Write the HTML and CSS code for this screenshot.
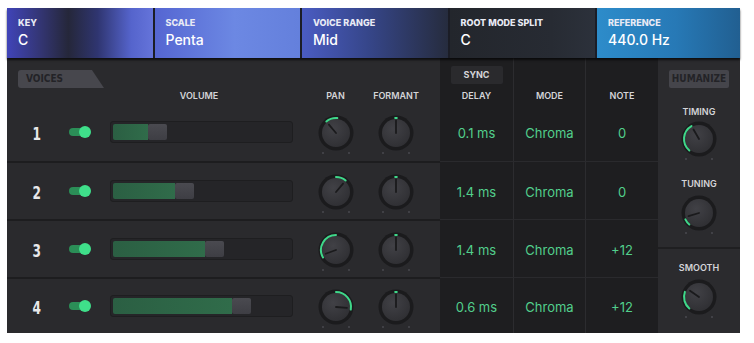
FILE: index.html
```html
<!DOCTYPE html>
<html lang="en">
<head>
<meta charset="UTF-8" />
<meta name="viewport" content="width=device-width, initial-scale=1" />
<title>Voice Harmonizer</title>
<link rel="stylesheet" href="styles.css">
</head>
<body>
  <svg class="defs" width="0" height="0" aria-hidden="true">
    <defs>
      <radialGradient id="knobBody" cx="40%" cy="35%" r="70%">
        <stop offset="0%" stop-color="#414146" />
        <stop offset="100%" stop-color="#2f2f33" />
      </radialGradient>
      <symbol id="knob-base" viewBox="0 0 40 44">
        <circle cx="20" cy="20" r="17.5" fill="#1b1b1d" />
        <circle cx="20" cy="20" r="14" fill="url(#knobBody)" />
        <circle cx="7" cy="40" r="0.9" fill="#4c4c52" />
        <circle cx="33" cy="40" r="0.9" fill="#4c4c52" />
      </symbol>
    </defs>
  </svg>

  <div class="app">
    <header class="topbar">
      <div class="tile tile-key"><span class="tile-label">KEY</span><span class="tile-value">C</span></div>
      <div class="tile tile-scale"><span class="tile-label">SCALE</span><span class="tile-value">Penta</span></div>
      <div class="tile tile-range"><span class="tile-label">VOICE RANGE</span><span class="tile-value">Mid</span></div>
      <div class="tile tile-split"><span class="tile-label">ROOT MODE SPLIT</span><span class="tile-value">C</span></div>
      <div class="tile tile-ref"><span class="tile-label">REFERENCE</span><span class="tile-value">440.0 Hz</span></div>
    </header>

    <main class="panel">
      <section class="voices">
        <div class="voices-head">
          <div class="tab">VOICES</div>
          <div class="voice-grid col-labels">
            <span></span><span></span>
            <span class="label">VOLUME</span>
            <span class="label">PAN</span>
            <span class="label">FORMANT</span>
          </div>
        </div>

        <div class="voice-grid voice-row">
          <span class="voice-num"><b>1</b></span>
          <span class="toggle"></span>
          <div class="slider"><span class="fill" style="width:35px"></span><span class="thumb"></span></div>
          <svg class="knob" viewBox="0 0 40 44"><use href="#knob-base" /><path class="arc" d="M10.36 8.51 A15 15 0 0 1 21.31 5.06" /><line class="needle" x1="20" y1="20" x2="12.93" y2="11.57" /></svg>
          <svg class="knob" viewBox="0 0 40 44"><use href="#knob-base" /><path class="arc" d="M19.2 5.02 A15 15 0 0 1 20.8 5.02" /><line class="needle" x1="20" y1="20" x2="20" y2="7.5" /></svg>
        </div>

        <div class="voice-grid voice-row">
          <span class="voice-num"><b>2</b></span>
          <span class="toggle"></span>
          <div class="slider"><span class="fill" style="width:62px"></span><span class="thumb"></span></div>
          <svg class="knob" viewBox="0 0 40 44"><use href="#knob-base" /><path class="arc" d="M20 5 A15 15 0 0 1 29.64 8.51" /><line class="needle" x1="20" y1="20" x2="27.07" y2="11.57" /></svg>
          <svg class="knob" viewBox="0 0 40 44"><use href="#knob-base" /><path class="arc" d="M19.2 5.02 A15 15 0 0 1 20.8 5.02" /><line class="needle" x1="20" y1="20" x2="20" y2="7.5" /></svg>
        </div>

        <div class="voice-grid voice-row">
          <span class="voice-num"><b>3</b></span>
          <span class="toggle"></span>
          <div class="slider"><span class="fill" style="width:92px"></span><span class="thumb"></span></div>
          <svg class="knob" viewBox="0 0 40 44"><use href="#knob-base" /><path class="arc" d="M7.01 27.5 A15 15 0 0 1 20 5" /><line class="needle" x1="20" y1="20" x2="9.66" y2="23.76" /></svg>
          <svg class="knob" viewBox="0 0 40 44"><use href="#knob-base" /><path class="arc" d="M19.2 5.02 A15 15 0 0 1 20.8 5.02" /><line class="needle" x1="20" y1="20" x2="20" y2="7.5" /></svg>
        </div>

        <div class="voice-grid voice-row last">
          <span class="voice-num"><b>4</b></span>
          <span class="toggle"></span>
          <div class="slider"><span class="fill" style="width:119px"></span><span class="thumb"></span></div>
          <svg class="knob" viewBox="0 0 40 44"><use href="#knob-base" /><path class="arc" d="M20 5 A15 15 0 0 1 34.77 22.6" /><line class="needle" x1="20" y1="20" x2="30.96" y2="20.96" /></svg>
          <svg class="knob" viewBox="0 0 40 44"><use href="#knob-base" /><path class="arc" d="M19.2 5.02 A15 15 0 0 1 20.8 5.02" /><line class="needle" x1="20" y1="20" x2="20" y2="7.5" /></svg>
        </div>
      </section>

      <section class="timing">
        <div class="timing-grid timing-head">
          <div class="cell"><span class="sync">SYNC</span><span class="label">DELAY</span></div>
          <div class="cell"><span class="label">MODE</span></div>
          <div class="cell"><span class="label">NOTE</span></div>
        </div>
        <div class="timing-grid timing-row"><span>0.1 ms</span><span>Chroma</span><span>0</span></div>
        <div class="timing-grid timing-row"><span>1.4 ms</span><span>Chroma</span><span>0</span></div>
        <div class="timing-grid timing-row"><span>1.4 ms</span><span>Chroma</span><span>+12</span></div>
        <div class="timing-grid timing-row last"><span>0.6 ms</span><span>Chroma</span><span>+12</span></div>
      </section>

      <aside class="humanize">
        <span class="hz-tab">HUMANIZE</span>
        <span class="label hz-timing">TIMING</span>
        <svg class="knob hz-knob" viewBox="0 0 40 44"><use href="#knob-base" /><path class="arc" d="M10.36 31.49 A15 15 0 0 1 12.5 7.01" /><line class="needle" x1="20" y1="20" x2="14.5" y2="10.47" /></svg>
        <span class="label hz-tuning">TUNING</span>
        <svg class="knob hz-knob" viewBox="0 0 40 44"><use href="#knob-base" /><path class="arc" d="M10.36 31.49 A15 15 0 0 1 6.41 26.34" /><line class="needle" x1="20" y1="20" x2="9.5" y2="23.2" /></svg>
        <div class="hz-sep"></div>
        <span class="label hz-smooth">SMOOTH</span>
        <svg class="knob hz-knob" viewBox="0 0 40 44"><use href="#knob-base" /><path class="arc" d="M10.36 31.49 A15 15 0 0 1 5.9 14.87" /><line class="needle" x1="20" y1="20" x2="10.99" y2="13.69" /></svg>
      </aside>
    </main>
  </div>
</body>
</html>
```

FILE: styles.css
```css
* {
  box-sizing: border-box;
}
body {
  margin: 0;
  background: #fff;
  font-family: Inter, 'Noto Sans', sans-serif;
  color: #fff;
}

.defs {
  position: absolute;
}

.app {
  width: 733px;
  margin: 8px 0 0 7px;
}

/* Top bar with the five setting tiles */
.topbar {
  display: flex;
  gap: 2px;
  height: 50px;
  background: #1b1d26;
  box-shadow: 0 2px 2px #000a;
  position: relative;
  z-index: 1;
}
.tile {
  flex: 1;
  display: flex;
  flex-direction: column;
  padding: 9px 0 0 11px;
}
.tile-label {
  font-size: 9px;
  line-height: 11px;
  font-weight: 800;
  color: #e8eaf4;
}
.tile-value {
  margin-top: 3px;
  font-size: 14px;
  line-height: 17px;
  font-weight: 500;
}
.tile-key {
  background: linear-gradient(90deg, #4044b8 0%, #343676 22%, #25273a 42%, #2f3570 62%, #5564cc 85%, #6574da 100%);
}
.tile-scale {
  background: linear-gradient(90deg, #5566d2 0%, #6c88e3 55%, #6480dc 100%);
}
.tile-range {
  background: linear-gradient(90deg, #4a5cc2 0%, #36468a 45%, #262c3e 100%);
}
.tile-split {
  background: linear-gradient(90deg, #23262c 0%, #272b33 70%, #2c313b 100%);
}
.tile-ref {
  flex: 0 0 143px;
  background: linear-gradient(90deg, #2d8cca 0%, #2779b6 55%, #215f91 100%);
}

/* Main panel */
.panel {
  display: flex;
  height: 275px;
}
.label {
  font-size: 9px;
  line-height: 11px;
  font-weight: 600;
  color: #d4d4d8;
  text-align: center;
}

.voices {
  width: 433px;
  background: #2a2a2d;
}
.voices-head {
  height: 45px;
  padding-top: 12px;
}
.tab {
  width: 86px;
  height: 18px;
  margin-left: 11px;
  padding-left: 8px;
  background: #47474d;
  clip-path: polygon(0 0, 86% 0, 100% 100%, 0 100%);
  border-radius: 3px 0 0 3px;
  font-family: 'DejaVu Sans Condensed', 'Liberation Sans Narrow', sans-serif;
  font-weight: 700;
  font-size: 10px;
  line-height: 18px;
  color: #232327;
}
.voice-grid {
  display: grid;
  grid-template-columns: 60px 26px 212px 61px 60px;
}
.col-labels {
  margin-top: 2px;
}
.voice-row {
  height: 58px;
  align-items: center;
  border-top: 2px solid #1d1d1f;
}
.voices-head + .voice-row {
  border-top: none;
}
.voice-row.last {
  height: 56px;
}
.voice-num {
  text-align: center;
  font-family: 'DejaVu Sans Condensed', 'Liberation Sans Narrow', sans-serif;
  font-weight: 700;
  font-size: 18px;
  color: #e8e8ea;
}
.voice-num b {
  display: inline-block;
  transform: scaleX(0.75);
  margin-top: 2px;
}
.toggle {
  position: relative;
  width: 20px;
  height: 8px;
  margin-left: 2px;
  border-radius: 4px;
  background: #2b8e57;
}
.toggle::after {
  content: '';
  position: absolute;
  right: -2px;
  top: -2px;
  width: 12px;
  height: 12px;
  border-radius: 50%;
  background: #3fdf8a;
}
.slider {
  display: flex;
  width: 183px;
  height: 22px;
  margin-left: 17px;
  padding: 2px;
  background: #252528;
  border: 1px solid #1e1e20;
  border-radius: 3px;
}
.fill {
  height: 16px;
  background: linear-gradient(90deg, #2b5f43, #306c4a);
  border-radius: 2px 0 0 2px;
}
.thumb {
  width: 19px;
  height: 16px;
  background: linear-gradient(180deg, #4a4a50, #3e3e44);
  border-radius: 2px;
}
.knob {
  width: 40px;
  height: 44px;
  justify-self: center;
  margin-top: 6px;
}
.arc {
  fill: none;
  stroke: #3fd88a;
  stroke-width: 2;
  stroke-linecap: round;
}
.needle {
  stroke: #1a1a1c;
  stroke-width: 1.8;
  stroke-linecap: round;
}

/* Delay / mode / note columns */
.timing {
  width: 218px;
  background: #1e1e20;
}
.timing-grid {
  display: grid;
  grid-template-columns: 73px 72px 73px;
}
.timing-grid > * + * {
  border-left: 1px solid #2c2c2f;
}
.timing-head {
  height: 45px;
}
.timing-head .cell {
  display: flex;
  flex-direction: column;
  align-items: center;
  justify-content: flex-end;
  padding-bottom: 2px;
}
.sync {
  width: 52px;
  height: 18px;
  margin-bottom: 6px;
  background: #2a2a2d;
  border-radius: 2px;
  font-size: 9px;
  line-height: 18px;
  font-weight: 700;
  color: #d4d4d8;
  text-align: center;
}
.timing-row {
  height: 58px;
  border-top: 1px solid #2a2a2d;
  font-size: 13px;
  color: #52cf8c;
}
.timing-head + .timing-row {
  border-top: none;
}
.timing-row.last {
  height: 56px;
}
.timing-row span {
  display: flex;
  align-items: center;
  justify-content: center;
  padding-top: 2px;
}

/* Humanize side panel */
.humanize {
  width: 82px;
  display: flex;
  flex-direction: column;
  align-items: center;
  background: #2b2b2e;
}
.hz-tab {
  width: 60px;
  height: 18px;
  margin-top: 12px;
  background: #45454b;
  border-radius: 2px;
  font-family: 'DejaVu Sans Condensed', 'Liberation Sans Narrow', sans-serif;
  font-weight: 700;
  font-size: 10px;
  line-height: 18px;
  color: #232327;
  text-align: center;
}
.hz-timing {
  margin-top: 18px;
}
.hz-knob {
  margin-top: 4px;
}
.hz-timing + .hz-knob {
  margin-top: 2px;
}
.hz-tuning {
  margin-top: 15px;
}
.hz-sep {
  width: 100%;
  height: 2px;
  margin-top: 10px;
  background: #1f1f21;
}
.hz-smooth {
  margin-top: 13px;
}
```
